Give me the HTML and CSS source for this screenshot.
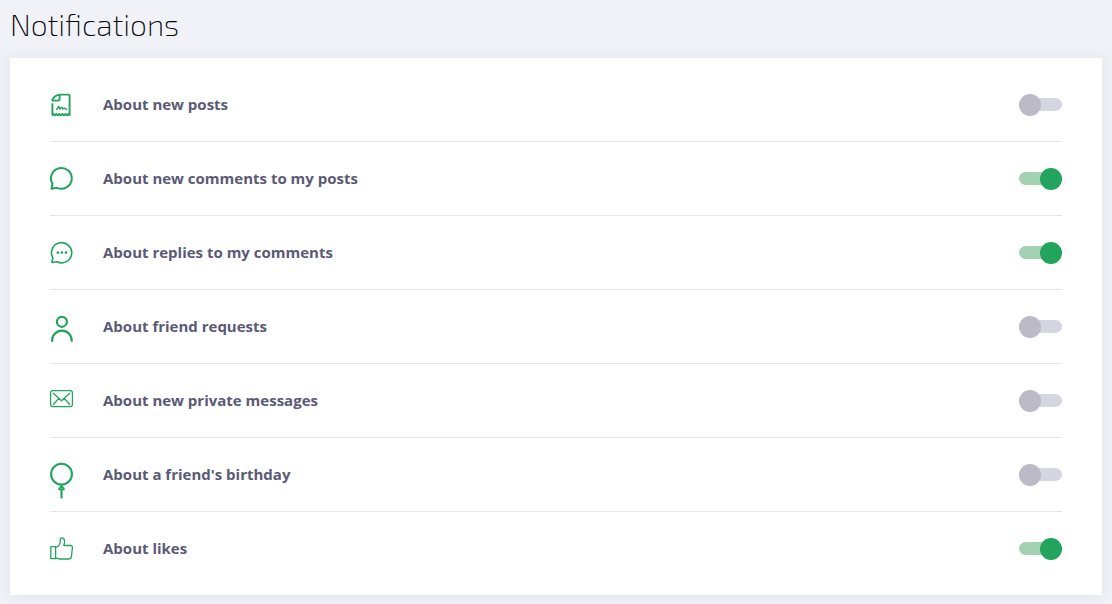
FILE: index.html
```html
<!DOCTYPE html>
<html lang="en">
<head>
<meta charset="utf-8">
<meta name="viewport" content="width=device-width, initial-scale=1">
<title>Notifications</title>
<link rel="stylesheet" href="styles.css">
</head>
<body>
<main class="page">
  <h1 class="title">Notifications</h1>
  <form class="card">
    <label class="row">
      <svg class="icon" viewBox="0 0 24 41" aria-hidden="true"><path d="M9.6 10.6H18.6Q19.6 10.6 19.6 11.6V31M9.6 10.6V15.2Q9.6 16.6 8 16.6H3.2Q1.8 16.6 2.6 15.3Q4.6 11.6 9.6 10.6M2.4 20V31L3.6 30L5 31.4L6.5 30L8 31.4L9.5 30L11 31.4L12.5 30L14 31.4L15.5 30L17 31.4L18.4 30L19.6 31" stroke-width="1.9"/><path d="M6.7 25.4L8.8 22.4L9.8 25L11.8 23.2L13 25L14.5 24L16.5 25.4" stroke-width="1.5"/></svg>
      <span class="name">About new posts</span>
      <input class="switch" type="checkbox" role="switch">
    </label>
    <label class="row">
      <svg class="icon" viewBox="0 0 24 41" aria-hidden="true"><path d="M1.5 30.7L2.5 25.8A10.4 10.4 0 1 1 7 29.8Z" stroke-width="2"/></svg>
      <span class="name">About new comments to my posts</span>
      <input class="switch" type="checkbox" role="switch" checked>
    </label>
    <label class="row">
      <svg class="icon" viewBox="0 0 24 41" aria-hidden="true"><path d="M1.9 30.5L2.9 25.8A10.1 10.1 0 1 1 7.2 29.8Z" stroke-width="1.6"/><g class="solid"><circle cx="7.8" cy="20.6" r="1.3"/><circle cx="11.9" cy="20.6" r="1.3"/><circle cx="16" cy="20.6" r="1.3"/></g></svg>
      <span class="name">About replies to my comments</span>
      <input class="switch" type="checkbox" role="switch" checked>
    </label>
    <label class="row">
      <svg class="icon" viewBox="0 0 24 41" aria-hidden="true"><g stroke-width="2.2"><circle cx="11.9" cy="15.8" r="5"/><path d="M2.1 35.8V34.4A9.8 9.8 0 0 1 21.7 34.4V35.8" stroke-linecap="butt"/></g></svg>
      <span class="name">About friend requests</span>
      <input class="switch" type="checkbox" role="switch">
    </label>
    <label class="row">
      <svg class="icon" viewBox="0 0 24 41" aria-hidden="true"><rect x=".6" y="10.6" width="21.8" height="16" rx="2.2" stroke-width="1.2"/><path d="M3.3 13.2L11.5 20.7L19.7 13.2M3.3 24.5L8.8 18.4M19.7 24.5L14.2 18.4" stroke-width="1.3"/></svg>
      <span class="name">About new private messages</span>
      <input class="switch" type="checkbox" role="switch">
    </label>
    <label class="row">
      <svg class="icon" viewBox="0 0 24 41" aria-hidden="true"><g stroke-width="2.1"><circle cx="11.5" cy="20.2" r="10.4"/><path d="M11.5 36V43.6"/><path d="M11.5 31.7L9 35.3H14Z" stroke-width="1.7"/></g></svg>
      <span class="name">About a friend's birthday</span>
      <input class="switch" type="checkbox" role="switch">
    </label>
    <label class="row">
      <svg class="icon" viewBox="0 0 24 41" aria-hidden="true"><path d="M.8 18.6H5.6V30.7H.8ZM5.6 19.3Q10.2 18 10.3 13V10.8Q10.4 9.8 11.4 9.8Q14.6 9.8 14.5 13.5Q14.5 15.5 13.8 17.5H20.5Q22.6 17.5 22.4 19.8L21.5 28.3Q21.2 31 18.4 31H10Q7.6 31 5.6 29.8" stroke-width="1.3"/></svg>
      <span class="name">About likes</span>
      <input class="switch" type="checkbox" role="switch" checked>
    </label>
  </form>
</main>
</body>
</html>
```
FILE: styles.css
```css
* {
  box-sizing: border-box;
}

body {
  margin: 0;
  background: #f0f2f8;
  font-family: "Open Sans", "Liberation Sans", sans-serif;
}

.page {
  padding: 0 10px 9px;
}

.title {
  margin: 0;
  padding-top: 4px;
  height: 58px;
  color: #000;
  font-family: "Exo 2", "Titillium Web", "Open Sans", sans-serif;
  font-size: 30px;
  font-weight: 200;
  line-height: 40px;
}

.card {
  padding: 10px 40px;
  background: #fff;
  box-shadow: 0 1px 15px 1px rgba(69, 65, 78, 0.08);
}

.row {
  display: flex;
  align-items: center;
  height: 74px;
  border-bottom: 1px solid #e6e6e6;
  cursor: pointer;
}

.row:last-child {
  height: 73px;
  border-bottom: 0;
}

.icon {
  flex: none;
  width: 24px;
  height: 41px;
  margin-right: 29px;
  overflow: visible;
  fill: none;
  stroke: #22a45d;
  stroke-linecap: round;
  stroke-linejoin: round;
}

.solid {
  fill: #22a45d;
  stroke: none;
}

.name {
  flex: 1;
  padding-bottom: 2px;
  color: #5b5a76;
  font-size: 15px;
  font-weight: 700;
  line-height: 20px;
}

.switch {
  appearance: none;
  display: flex;
  align-items: center;
  flex: none;
  width: 43px;
  height: 13px;
  margin: 0;
  border-radius: 7px;
  background: #d6d5e2;
  cursor: pointer;
}

.switch::before {
  content: "";
  flex: none;
  width: 22px;
  height: 22px;
  border-radius: 50%;
  background: #bbbac6;
}

.switch:checked {
  justify-content: flex-end;
  background: #a5d1b3;
}

.switch:checked::before {
  background: #22a45d;
}
```
